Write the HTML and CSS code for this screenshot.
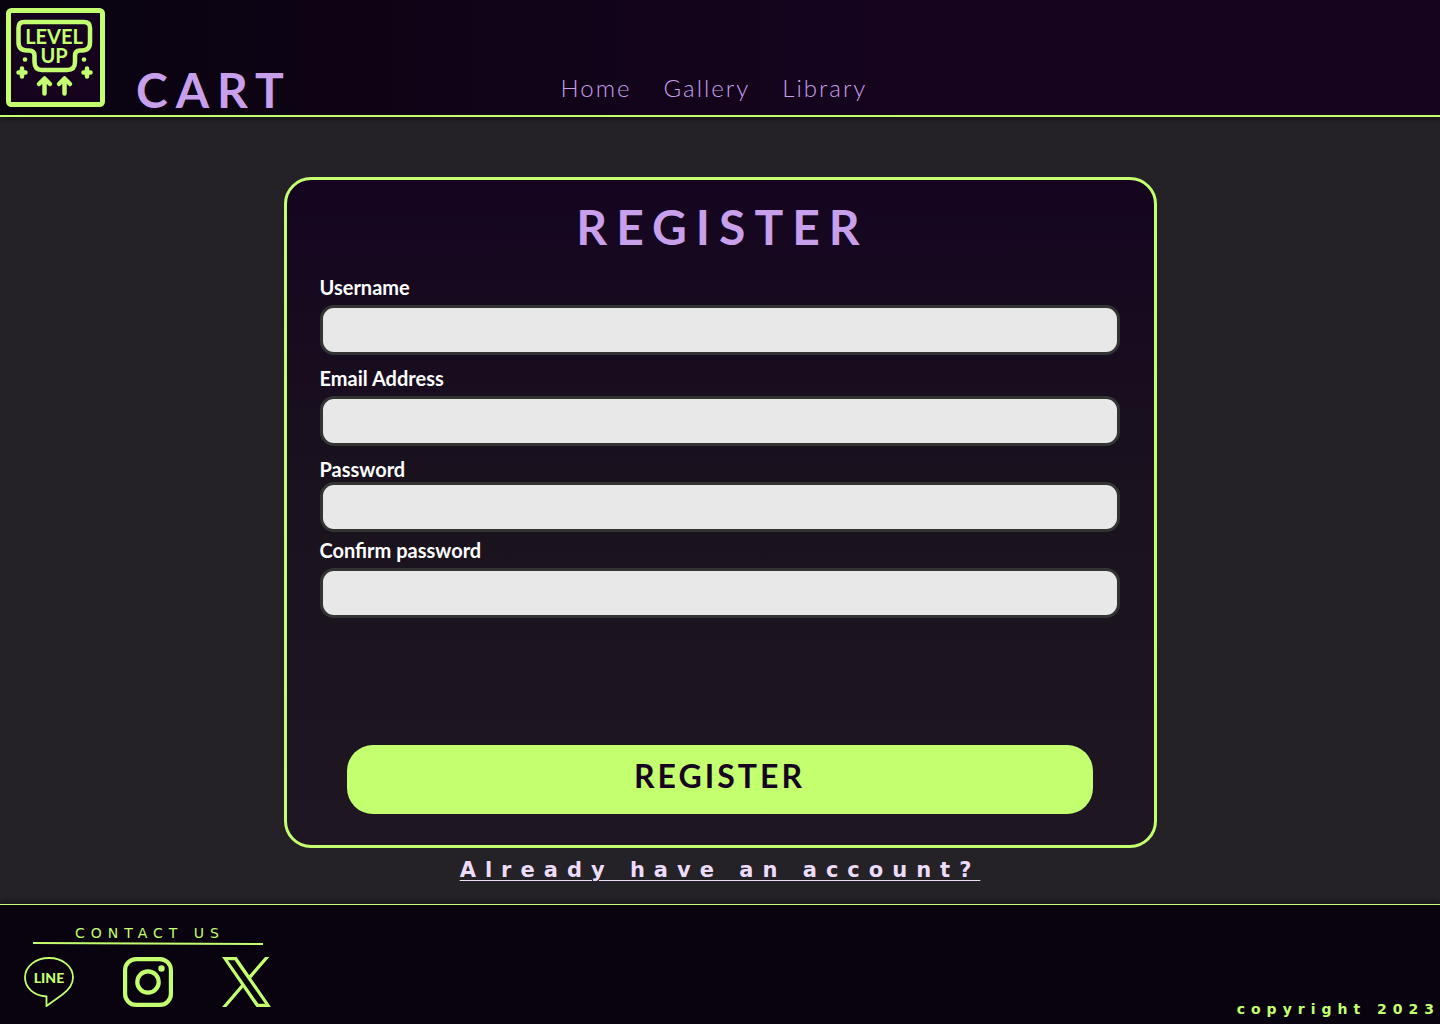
FILE: index.html
```html
<!DOCTYPE html>
<html lang="en">
<head>
<meta charset="utf-8">
<meta name="viewport" content="width=device-width, initial-scale=1">
<title>Register</title>
<link rel="stylesheet" href="styles.css">
</head>
<body>
<header class="header">
  <div class="brand">
    <a class="logo" href="#" aria-label="Level Up home">
      <svg width="99" height="99" viewBox="0 0 99 99" fill="none" stroke="currentColor" stroke-linecap="round" stroke-linejoin="round">
        <rect x="2.500" y="2.500" width="94" height="94" rx="3" fill="#16041f" stroke-width="5"/>
        <path d="M18 14H78Q84 14 84 20V34Q84 42.500 76 42.500H74Q69 42.500 69 48V54Q69 62 61 62H36Q28.500 62 28.500 54V48Q28.500 42.500 23 42.500H21Q12.500 42.500 12.500 34V20Q12.500 14 18 14Z" stroke-width="4.500"/>
        <path d="M16 60.500V68.500M12.500 64.500H19.500M81 60.500V68.500M77.500 64.500H84.500" stroke-width="4.500"/>
        <path d="M38.500 85.500V71.500M33 76L38.500 70.500L44 76M58.500 85.500V71.500M53 76L58.500 70.500L64 76" stroke-width="4.500"/>
        <g fill="currentColor" stroke="none"><circle cx="19" cy="51.500" r="2.300"/><circle cx="78" cy="51.500" r="2.300"/></g>
        <text class="logo-text"><tspan x="48" y="36">LEVEL</tspan><tspan x="48" y="55">UP</tspan></text>
      </svg>
    </a>
    <span class="page-name">CART</span>
  </div>
  <nav class="nav">
    <a href="#">Home</a>
    <a href="#">Gallery</a>
    <a href="#">Library</a>
  </nav>
</header>

<main class="main">
  <form class="card">
    <h1 class="title">REGISTER</h1>
    <div class="field">
      <label for="username">Username</label>
      <input id="username" type="text">
    </div>
    <div class="field">
      <label for="email">Email Address</label>
      <input id="email" type="email">
    </div>
    <div class="field field-tight">
      <label for="password">Password</label>
      <input id="password" type="password">
    </div>
    <div class="field field-last">
      <label for="confirm">Confirm password</label>
      <input id="confirm" type="password">
    </div>
    <button class="submit" type="submit">REGISTER</button>
  </form>
  <a class="login-link" href="#">Already have an account?</a>
</main>

<footer class="footer">
  <section class="contact">
    <h2 class="contact-title">CONTACT US</h2>
    <svg class="contact-rule" width="230" height="4" viewBox="0 0 230 4"><path d="M0 1L230 2" stroke="currentColor" stroke-width="2"/></svg>
    <div class="social">
      <a href="#" aria-label="LINE">
        <svg width="50" height="50" viewBox="0 0 50 50" fill="none" stroke="currentColor" stroke-width="1.800">
          <path d="M22.500 39.500C10 38.500 1 31 1 20.500C1 9.500 11.500 1 25 1S49 9.500 49 20.500C49 27.500 44.500 33 38.500 37.500L22.500 49Z"/>
          <text class="line-text" x="25" y="25.500">LINE</text>
        </svg>
      </a>
      <a href="#" aria-label="Instagram">
        <svg width="50" height="50" viewBox="0 0 50 50" fill="none" stroke="currentColor" stroke-width="4.200">
          <rect x="2.100" y="2.100" width="45.800" height="45.800" rx="11"/>
          <circle cx="25" cy="25" r="10.700"/>
          <circle cx="38.500" cy="11.500" r="3.200" fill="currentColor" stroke="none"/>
        </svg>
      </a>
      <a href="#" aria-label="X">
        <svg width="49" height="50" viewBox="0 0 1200 1227" fill="currentColor">
          <path d="M714.163 519.284L1160.890 0H1055.030L667.137 450.887L357.328 0H0L468.492 681.821L0 1226.370H105.866L515.491 750.218L842.672 1226.370H1200L714.137 519.284ZM569.165 687.828L521.697 619.934L144.011 79.694H306.615L611.412 515.685L658.880 583.579L1055.080 1150.300H892.476L569.165 687.854Z"/>
        </svg>
      </a>
    </div>
  </section>
  <p class="copyright">copyright 2023</p>
</footer>
</body>
</html>
```
FILE: styles.css
```css
* { box-sizing: border-box; }

:root {
  --lime: #c4ff70;
  --violet: #c89fea;
  --ink: #150520;
}

body {
  margin: 0;
  min-height: 100vh;
  display: flex;
  flex-direction: column;
  background: #242127;
  font-family: Lato, "Open Sans", sans-serif;
}

a { color: inherit; text-decoration: none; }
svg { display: block; }

.header {
  display: grid;
  grid-template-columns: 1fr auto 1fr;
  align-items: end;
  padding: 8px 6px;
  border-bottom: 2px solid var(--lime);
  background: linear-gradient(90deg, #09030f, #16041f 65%);
  box-shadow: 0 4px 4px rgba(0, 0, 0, 0.25);
}

.brand {
  display: flex;
  align-items: flex-end;
  gap: 31px;
}

.logo { color: var(--lime); }

.logo-text {
  fill: currentColor;
  stroke: none;
  font-size: 20px;
  font-weight: 700;
  text-anchor: middle;
}

.page-name {
  color: var(--violet);
  font-size: 48px;
  font-weight: 700;
  line-height: 34px;
  letter-spacing: 8px;
}

.nav {
  display: flex;
  gap: 32px;
  padding: 0 12px 4px 0;
  color: var(--violet);
  font-size: 24px;
  font-weight: 300;
  line-height: 30px;
  letter-spacing: 2px;
}

.main {
  flex: 1;
  display: flex;
  flex-direction: column;
  align-items: center;
  padding: 60px 16px 20px;
}

.card {
  display: flex;
  flex-direction: column;
  width: 100%;
  max-width: 873px;
  padding: 22px 34px 31px 33px;
  border: 3px solid var(--lime);
  border-radius: 27px;
  background: linear-gradient(#150520, #1a131e 50%, #1e1722);
}

.title {
  margin: 0 0 23px;
  padding-left: 6px;
  color: var(--violet);
  font-size: 48px;
  font-weight: 700;
  line-height: 50px;
  letter-spacing: 9px;
  text-align: center;
}

.field {
  display: flex;
  flex-direction: column;
  gap: 6px;
  margin-bottom: 11px;
}

.field-tight { gap: 1px; margin-bottom: 6px; }
.field-last { margin-bottom: 127px; }

.field label {
  color: #fff;
  font-size: 20px;
  font-weight: 700;
  line-height: 24px;
}

.field input {
  width: 100%;
  height: 50px;
  padding: 0 16px;
  border: 3px solid #333;
  border-radius: 14px;
  background: #e8e8e8;
  color: var(--ink);
  font: inherit;
  font-size: 20px;
}

.submit {
  margin: 0 27px;
  padding: 11px 0 18px;
  border: 0;
  border-radius: 26px;
  background: var(--lime);
  color: var(--ink);
  font-family: inherit;
  font-size: 32px;
  font-weight: 700;
  line-height: 40px;
  letter-spacing: 3px;
}

.login-link {
  margin-top: 8px;
  color: #ecdcfa;
  font-family: "DejaVu Sans", sans-serif;
  font-size: 21px;
  font-weight: 700;
  line-height: 28px;
  letter-spacing: 9px;
  text-decoration: underline;
  text-decoration-thickness: 1px;
  text-underline-offset: 3px;
}

.footer {
  display: flex;
  justify-content: space-between;
  align-items: flex-end;
  padding: 20px 0 5px 24px;
  border-top: 1px solid var(--lime);
  background: #09030f;
  color: var(--lime);
  box-shadow: 0 -4px 4px rgba(0, 0, 0, 0.25);
  font-family: "DejaVu Sans", sans-serif;
}

.contact {
  display: flex;
  flex-direction: column;
  align-items: center;
  padding-bottom: 12px;
}

.contact-title {
  margin: 0;
  padding-left: 5px;
  font-size: 14px;
  font-weight: 400;
  line-height: 17px;
  letter-spacing: 6px;
}

.contact-rule { margin-bottom: 11px; }

.social {
  display: flex;
  gap: 49px;
}

.line-text {
  fill: currentColor;
  stroke: none;
  font-family: Lato, sans-serif;
  font-size: 14px;
  font-weight: 900;
  text-anchor: middle;
}

.copyright {
  margin: 0;
  font-size: 14px;
  font-weight: 700;
  line-height: 20px;
  letter-spacing: 6px;
}
```
